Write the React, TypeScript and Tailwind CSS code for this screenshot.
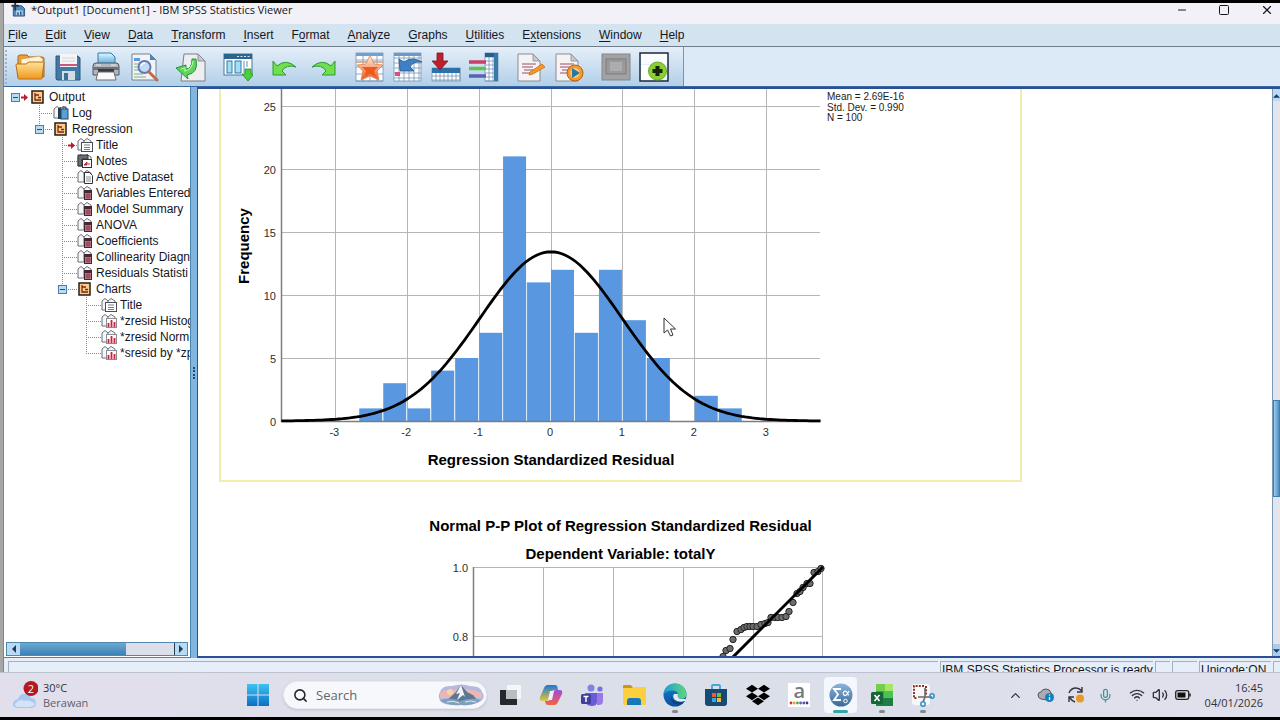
import React, { useId } from "react";
import { ChevronUp, Mic, Minus, Search, Square, Volume2, Wifi, X } from "lucide-react";
import { FaDropbox } from "react-icons/fa";

/* ---------- Menu ---------- */

const menus: [string, string, string][] = [
  ["", "F", "ile"],
  ["", "E", "dit"],
  ["", "V", "iew"],
  ["", "D", "ata"],
  ["", "T", "ransform"],
  ["", "I", "nsert"],
  ["F", "o", "rmat"],
  ["", "A", "nalyze"],
  ["", "G", "raphs"],
  ["", "U", "tilities"],
  ["E", "x", "tensions"],
  ["", "W", "indow"],
  ["", "H", "elp"],
];

/* ---------- Toolbar icons ---------- */

function Icon({ children }: { children: React.ReactNode }) {
  return (
    <svg viewBox="0 0 30 30" className="h-[30px] w-[30px]" aria-hidden="true">
      {children}
    </svg>
  );
}

function Grad({ id, a, b }: { id: string; a: string; b: string }) {
  return (
    <linearGradient id={id} x1="0" y1="0" x2="0" y2="1">
      <stop offset="0" stopColor={a} />
      <stop offset="1" stopColor={b} />
    </linearGradient>
  );
}

function OpenIcon() {
  const g = useId();
  return (
    <Icon>
      <Grad id={g} a="#fde39a" b="#f0981c" />
      <path d="M3 5q0-2 2-2h7l2 2h13q2 0 2 2v18H3z" fill="#efa42f" stroke="#a8621a" strokeWidth="1" />
      <path d="M6 7l18-3 4 3v6H6z" fill="#fff3d4" stroke="#c98a3a" strokeWidth=".7" />
      <path d="M1 13q0-1 1-1h9l3-2h14q1 0 1 1l-2 15q0 1-1 1H4q-1 0-1-1z" fill={`url(#${g})`} stroke="#b86e16" strokeWidth="1" />
    </Icon>
  );
}

function SaveIcon() {
  return (
    <Icon>
      <path d="M3 4h22l2 2v22H4l-1-1z" fill="#4179a6" stroke="#2b587f" />
      <rect x="7" y="2" width="17" height="13" fill="#f5f5f8" />
      <path d="M7 13h17" stroke="#c2305f" strokeWidth="1.6" />
      <path d="M9 6h13M9 9h13" stroke="#c9ccd4" strokeWidth=".8" />
      <rect x="9" y="19" width="13" height="9" fill="#d5dbe2" />
      <rect x="11" y="21" width="4" height="7" fill="#3e6f99" />
    </Icon>
  );
}

function PrintIcon() {
  const g = useId();
  return (
    <Icon>
      <Grad id={g} a="#e2f6ff" b="#4ba7dc" />
      <path d="M7 1h13l4 4v8H7z" fill={`url(#${g})`} stroke="#3979a5" />
      <path d="M2 14q0-3 3-3h20q3 0 3 3v9H2z" fill="#b3b6bd" stroke="#54575e" />
      <path d="M2 15h26v3H2z" fill="#6f727a" />
      <rect x="7" y="17" width="16" height="3" fill="#393b41" />
      <path d="M7 20h16l2 8H5z" fill="#fafafa" stroke="#686b72" />
      <path d="M5 13h5M20 13h5" stroke="#e9e9ec" />
    </Icon>
  );
}

function PreviewIcon() {
  return (
    <Icon>
      <path d="M3 2h18l6 6v20H3z" fill="#f1f3f7" stroke="#77818e" />
      <path d="M21 2v6h6z" fill="#4e86b3" />
      <path d="M5 6h6v3H5z" fill="#5c9de0" />
      <path d="M5 12h5M5 15h5M5 18h5M5 22h9M5 25h12" stroke="#79b37c" />
      <circle cx="15.500" cy="15" r="6" fill="#c4d8f8" stroke="#6578b2" strokeWidth="2" />
      <path d="M12 14q1-3 4-3" stroke="#fff" strokeWidth="1.500" fill="none" />
      <path d="M20 20l8 8" stroke="#bf6b4b" strokeWidth="3" strokeLinecap="round" />
    </Icon>
  );
}

function ExportIcon() {
  return (
    <Icon>
      <path d="M8 2h14l7 7v20H5z" fill="#eeeef0" stroke="#7b7e86" />
      <path d="M22 2v7h7z" fill="#c8cad0" stroke="#7b7e86" strokeWidth=".8" />
      <path d="M0 16l10-3v4q6 0 6-10h4q3 14-9 16l1 4z" fill="#5fd45c" stroke="#249538" strokeWidth="1" />
      <path d="M5 17l4-1v3q7-1 8-10" fill="none" stroke="#b6f5a5" strokeWidth="1.200" />
    </Icon>
  );
}

function RecallIcon() {
  return (
    <Icon>
      <rect x="1" y="2" width="28" height="21" fill="#fff" stroke="#4e7495" />
      <rect x="1" y="2" width="28" height="5" fill="#2c638f" />
      <path d="M14 4.500h13" stroke="#cfe6f5" strokeDasharray="2 1.500" />
      <rect x="4" y="9" width="5" height="12" fill="#a4def5" stroke="#2d78a8" />
      <rect x="12" y="9" width="6" height="12" fill="#a4def5" stroke="#2d78a8" />
      <path d="M21 9v12M24 9v6" stroke="#5796bd" />
      <path d="M22 17h6v5h3l-6 7-6-7h3z" fill="#4bcf3c" stroke="#23882a" strokeWidth=".8" />
    </Icon>
  );
}

function CurvedArrow({ flip }: { flip?: boolean }) {
  return (
    <Icon>
      <g transform={flip ? "translate(30 0) scale(-1 1)" : undefined}>
        <path d="M3 9l4 5q9-8 19 1-10-3-14 4l4 4H3z" fill="#6ee04e" stroke="#2f9a35" strokeWidth="1" strokeLinejoin="round" />
      </g>
    </Icon>
  );
}

function Grid({ x, y, w, h, step = 5 }: { x: number; y: number; w: number; h: number; step?: number }) {
  const cols = Math.floor(w / step);
  const rows = Math.floor(h / step);
  return (
    <g stroke="#7695b5" strokeWidth=".8">
      <rect x={x} y={y} width={w} height={h} fill="#fdfdff" />
      {Array.from({ length: cols }, (_, i) => (
        <path key={`c${i}`} d={`M${x + (i + 1) * step} ${y}v${h}`} />
      ))}
      {Array.from({ length: rows }, (_, i) => (
        <path key={`r${i}`} d={`M${x} ${y + (i + 1) * step}h${w}`} />
      ))}
    </g>
  );
}

function StarIcon() {
  const g = useId();
  return (
    <Icon>
      <Grad id={g} a="#fff4e6" b="#ee5a1b" />
      <Grid x={1} y={1} w={27} h={28} step={7} />
      <rect x="1" y="1" width="27" height="3" fill="#6ea0d6" />
      <path d="M1 10h27" stroke="#cf9a72" strokeWidth="1.500" />
      <path d="M15 3l4 9 9 1-6 6 2 9-9-4-9 4 2-9-6-6 9-1z" fill={`url(#${g})`} stroke="#e08454" strokeWidth=".8" />
      <path d="M7 15h16l-4 4 2 6-6-3-6 3 2-6z" fill="#ef5a1c" />
    </Icon>
  );
}

function GotoCaseIcon() {
  return (
    <Icon>
      <Grid x={1} y={1} w={27} h={28} />
      <rect x="1" y="1" width="27" height="3" fill="#6a9acb" />
      <path d="M7 19l-1-12 5 3q8-6 18 0-9-1-12 5l4 4z" fill="#3f80c4" stroke="#24558e" strokeWidth=".8" />
      <rect x="2" y="20" width="5" height="4" fill="#db4f7a" />
    </Icon>
  );
}

function GotoVariableIcon() {
  return (
    <Icon>
      <Grid x={1} y={16} w={28} h={13} step={4} />
      <rect x="1" y="16" width="28" height="5" fill="#2b71a6" />
      <path d="M6 1h6v8h5l-8 9-8-9h5z" fill="#bf1f2c" stroke="#7e1520" strokeWidth=".8" />
    </Icon>
  );
}

function VariablesIcon() {
  return (
    <Icon>
      <Grid x={16} y={1} w={13} h={28} step={4} />
      <rect x="16" y="1" width="13" height="4" fill="#265f8c" />
      <rect x="25" y="1" width="4" height="28" fill="#347bab" />
      <path d="M0 10h17" stroke="#c93f66" strokeWidth="3.500" />
      <path d="M0 16.500h17" stroke="#62c04c" strokeWidth="3.500" />
      <path d="M0 24h17" stroke="#5465b4" strokeWidth="3.500" />
    </Icon>
  );
}

function ScriptPage() {
  return (
    <>
      <path d="M2 2h15l7 7v20H2z" fill="#f5f3f4" stroke="#8b8c92" />
      <path d="M17 2v7h7z" fill="#c8c8cd" stroke="#8b8c92" strokeWidth=".8" />
      <path d="M6 12h14M6 15h11M8 18h12M6 21h11" stroke="#9a5266" strokeWidth="1.200" />
    </>
  );
}

function EditScriptIcon() {
  return (
    <Icon>
      <ScriptPage />
      <path d="M14 20l12-8 3 3-12 7-4 1z" fill="#f39a25" stroke="#c56d19" strokeWidth=".8" />
    </Icon>
  );
}

function RunScriptIcon() {
  return (
    <Icon>
      <ScriptPage />
      <circle cx="21" cy="21" r="8" fill="#f49a2a" stroke="#b76112" />
      <circle cx="21" cy="21" r="5" fill="#f9c57b" />
      <path d="M18 16l8 5-8 5z" fill="#2678a8" />
    </Icon>
  );
}

function DisabledIcon() {
  return (
    <Icon>
      <rect x="1" y="2" width="28" height="26" fill="#a2a2a4" stroke="#858588" />
      <rect x="5" y="7" width="20" height="15" fill="#9a9a9c" stroke="#7c7c80" />
      <rect x="9" y="10" width="12" height="9" fill="#adadae" />
    </Icon>
  );
}

function AddIcon() {
  return (
    <Icon>
      <rect x="1" y="1" width="28" height="28" fill="#e4f0fb" stroke="#1c2a3d" strokeWidth="1.500" />
      <path d="M2 2h26v10H2z" fill="#f9fcff" />
      <path d="M2 13h13v15H2z" fill="#fff" />
      <circle cx="18.500" cy="19" r="9" fill="#8bd02e" stroke="#6ba828" />
      <path d="M18.500 14v10M13.500 19h10" stroke="#17240f" strokeWidth="4" />
    </Icon>
  );
}

const toolGroups: { label: string; icon: React.ReactNode }[][] = [
  [
    { label: "Open", icon: <OpenIcon /> },
    { label: "Save", icon: <SaveIcon /> },
    { label: "Print", icon: <PrintIcon /> },
    { label: "Print preview", icon: <PreviewIcon /> },
  ],
  [{ label: "Export", icon: <ExportIcon /> }],
  [{ label: "Recall dialogs", icon: <RecallIcon /> }],
  [
    { label: "Undo", icon: <CurvedArrow /> },
    { label: "Redo", icon: <CurvedArrow flip /> },
  ],
  [
    { label: "Go to data", icon: <StarIcon /> },
    { label: "Go to case", icon: <GotoCaseIcon /> },
    { label: "Go to variable", icon: <GotoVariableIcon /> },
    { label: "Variables", icon: <VariablesIcon /> },
  ],
  [
    { label: "Edit script", icon: <EditScriptIcon /> },
    { label: "Run script", icon: <RunScriptIcon /> },
  ],
  [
    { label: "Designate window", icon: <DisabledIcon /> },
    { label: "Add", icon: <AddIcon /> },
  ],
];

/* ---------- Outline tree ---------- */

type Kind = "folder" | "log" | "title" | "notes" | "data" | "table" | "chart";
type Node = { label: string; depth: number; kind: Kind; open?: boolean; current?: boolean; last?: boolean };

const tree: Node[] = [
  { label: "Output", depth: 0, kind: "folder", open: true, current: true },
  { label: "Log", depth: 1, kind: "log" },
  { label: "Regression", depth: 1, kind: "folder", open: true, last: true },
  { label: "Title", depth: 2, kind: "title", current: true },
  { label: "Notes", depth: 2, kind: "notes" },
  { label: "Active Dataset", depth: 2, kind: "data" },
  { label: "Variables Entered", depth: 2, kind: "table" },
  { label: "Model Summary", depth: 2, kind: "table" },
  { label: "ANOVA", depth: 2, kind: "table" },
  { label: "Coefficients", depth: 2, kind: "table" },
  { label: "Collinearity Diagn", depth: 2, kind: "table" },
  { label: "Residuals Statisti", depth: 2, kind: "table" },
  { label: "Charts", depth: 2, kind: "folder", open: true, last: true },
  { label: "Title", depth: 3, kind: "title" },
  { label: "*zresid Histog", depth: 3, kind: "chart" },
  { label: "*zresid Norm", depth: 3, kind: "chart" },
  { label: "*sresid by *zp", depth: 3, kind: "chart", last: true },
];

const indent = [26, 49, 73, 97];
const trunk = [11, 35, 58, 82];

function Branch({ node }: { node: Node }) {
  const w = indent[node.depth];
  const x = trunk[node.depth];
  return (
    <svg width={w} height="16" className="shrink-0" aria-hidden="true">
      {node.depth > 0 && (
        <g stroke="#4f9aa8" strokeDasharray="1 1">
          <path d={`M${x + 0.5} 0V${node.last ? 8 : 16}`} />
          <path d={`M${x} 8.5H${w}`} />
        </g>
      )}
      {node.open && (
        <g>
          <rect x={x - 3.5} y="4.500" width="8" height="8" fill="#b9dcf5" stroke="#4480b5" />
          <path d={`M${x - 2} 8.5h5`} stroke="#1f4f86" />
        </g>
      )}
      {node.current && (
        <path d={`M${w - 9} 7.5h3v-2.5l4 3.5-4 3.500v-2.500h-3z`} fill="#bf1730" />
      )}
    </svg>
  );
}

function NodeIcon({ kind }: { kind: Kind }) {
  if (kind === "folder") {
    return (
      <svg width="16" height="16" className="shrink-0" aria-hidden="true">
        <rect x="2" y="2" width="11" height="12" fill="#f9cf8c" stroke="#2b1c10" strokeWidth="1.500" />
        <path d="M5 4v7h3M5 6h4M8 8.500h3M8 11h3" stroke="#8a1f18" strokeWidth="1.300" fill="none" />
      </svg>
    );
  }
  return (
    <svg width="16" height="16" className="shrink-0" aria-hidden="true">
      <path d="M1 13V4l3-2.500 3 2.500v9H1zM7 4l3-2.500L14 4v9H7" fill="#f7f7f9" stroke="#6a6c74" />
      {kind === "log" && (
        <>
          <path d="M5 3l3-1v12H5z" fill="#2c3d4c" />
          <rect x="8" y="4" width="7" height="10" fill="#5b9fd3" stroke="#1d4a73" />
          <path d="M10 4V2h3v2" stroke="#1d4a73" fill="none" />
        </>
      )}
      {kind === "title" && (
        <>
          <rect x="4.500" y="5.500" width="11" height="9" fill="#fff" stroke="#4b4d55" />
          <path d="M7 8h6M7 10.500h6M7 12.500h6" stroke="#777983" />
        </>
      )}
      {kind === "notes" && (
        <>
          <path d="M1 2h10v4H5v7H1z" fill="#6b6d74" stroke="#303238" />
          <rect x="5.500" y="6.500" width="9" height="8" fill="#fff" stroke="#303238" />
          <path d="M7 12l3-3v3zM11 11h2" stroke="#b62a45" fill="#b62a45" />
        </>
      )}
      {kind === "data" && (
        <>
          <path d="M7.500 3.500h5l3 3v8h-8z" fill="#fff" stroke="#303238" />
          <path d="M9 8h5M9 10h5M9 12h5" stroke="#8b8d95" />
        </>
      )}
      {kind === "table" && (
        <>
          <rect x="7.500" y="5.500" width="7" height="9" fill="#c98a96" stroke="#3c2a33" />
          <rect x="8" y="6" width="6" height="2" fill="#54202f" />
          <path d="M8 10h6M8 12h6M10 8v6M12 8v6" stroke="#7f3345" strokeWidth=".8" />
        </>
      )}
      {kind === "chart" && (
        <>
          <rect x="5.500" y="5.500" width="10" height="9" fill="#fff" stroke="#8b8d95" />
          <path d="M7.500 14v-4M10.500 14V7M13.500 14V9" stroke="#c2253f" strokeWidth="1.800" />
        </>
      )}
    </svg>
  );
}

function Outline() {
  return (
    <ul className="min-h-0 flex-1 overflow-hidden">
      {tree.map((n, i) => (
        <li key={i} className="flex h-4 items-center overflow-hidden leading-4 whitespace-nowrap">
          <Branch node={n} />
          <NodeIcon kind={n.kind} />
          <span className="ml-[3px] text-[#161622]">{n.label}</span>
        </li>
      ))}
    </ul>
  );
}

/* ---------- Charts ---------- */

const counts = [1, 3, 1, 4, 5, 7, 21, 11, 12, 7, 12, 8, 5, 0, 2, 1];
const hx = (v: number) => 330 + v * 71.9;
const hy = (n: number) => 332 - n * 12.6;
const density = (v: number) => (100 / 3 / (0.99 * Math.sqrt(2 * Math.PI))) * Math.exp(-(v * v) / (2 * 0.99 * 0.99));
const curve = Array.from({ length: 151 }, (_, i) => {
  const v = -3.75 + i * 0.05;
  return `${i ? "L" : "M"}${hx(v).toFixed(1)} ${hy(density(v)).toFixed(1)}`;
}).join("");

function Histogram() {
  return (
    <svg viewBox="0 0 799 391" className="block h-[391px] w-[799px]" role="img" aria-label="Histogram of regression standardized residual" fontFamily="Liberation Sans, Arial, sans-serif">
      <g stroke="#b5b5b5">
        {[5, 10, 15, 20, 25].map((n) => (
          <path key={n} d={`M60 ${Math.floor(hy(n)) + 0.5}H599`} />
        ))}
        {[-3, -2, -1, 0, 1, 2, 3].map((v) => (
          <path key={v} d={`M${Math.floor(hx(v)) + 0.5} 0V332`} />
        ))}
      </g>
      {counts.map((n, i) => (
        <rect key={i} x={hx(-8 / 3 + i / 3)} y={hy(n)} width="23" height={n * 12.6} fill="#5997e0" />
      ))}
      {counts.slice(1).map((_, i) => (
        <path key={i} d={`M${hx(-8 / 3 + (i + 1) / 3) - 0.5} ${hy(Math.min(counts[i], counts[i + 1]))}V332`} stroke="#d8e8f8" />
      ))}
      <path d="M60.500 0V332.500H599" fill="none" stroke="#7d7d7d" strokeWidth="1.500" />
      <path d={curve} fill="none" stroke="#000" strokeWidth="2.800" />
      <g fontSize="11" fill="#2e2e2e">
        {[0, 5, 10, 15, 20, 25].map((n) => (
          <text key={n} x="55" y={hy(n) + 5} textAnchor="end">{n}</text>
        ))}
        {[-3, -2, -1, 0, 1, 2, 3].map((v) => (
          <text key={v} x={hx(v) - 1} y="347" textAnchor="middle">{v}</text>
        ))}
      </g>
      <g fontSize="10" fill="#1c1c1c">
        <text x="606" y="11">Mean = 2.69E-16</text>
        <text x="606" y="22">Std. Dev. = 0.990</text>
        <text x="606" y="32">N = 100</text>
      </g>
      <g fontSize="15" fontWeight="700" fill="#000" textAnchor="middle">
        <text x="330" y="376">Regression Standardized Residual</text>
        <text transform="translate(28 157) rotate(-90)">Frequency</text>
      </g>
    </svg>
  );
}

const points: [number, number][] = [
  [275, 90], [278, 84], [282, 82], [285, 73], [289, 65], [293, 63], [296, 61], [299, 60], [302, 60], [305, 60], [309, 60],
  [313, 58], [317, 57], [320, 56], [323, 51], [327, 51], [330, 51], [334, 51], [338, 50], [341, 45],
  [345, 36], [349, 27], [352, 25], [355, 21], [359, 17], [362, 17], [366, 6], [370, 5], [373, 2],
];

function PPPlot() {
  return (
    <svg viewBox="0 2 803 93" className="block h-[93px] w-[803px] overflow-visible" role="img" aria-label="Normal P-P plot" fontFamily="Liberation Sans, Arial, sans-serif">
      <g transform="translate(229 0)">
        <g stroke="#b5b5b5">
          <path d="M25 1.500H375M25 70.500H375" />
          <path d="M95.500 1V95M165.500 1V95M235.500 1V95M305.500 1V95M374.500 1V95" />
        </g>
        <path d="M25.500 1V95" stroke="#7d7d7d" strokeWidth="1.500" />
        <g fill="#6c6c6c" stroke="#262626">
          {points.map(([x, y]) => (
            <circle key={`${x}-${y}`} cx={x} cy={y + 0.5} r="3.200" />
          ))}
        </g>
        <path d="M375 1L281 95" stroke="#000" strokeWidth="3" />
        <g fontSize="11" fontWeight="400" fill="#2e2e2e" textAnchor="end">
          <text x="20" y="6">1.0</text>
          <text x="20" y="75">0.8</text>
        </g>
      </g>
    </svg>
  );
}

/* ---------- Taskbar ---------- */

function WindowsLogo() {
  const g = useId();
  return (
    <svg viewBox="0 0 22 22" className="h-[22px] w-[22px]" aria-hidden="true">
      <Grad id={g} a="#3dc3f2" b="#0b6fc4" />
      <path d="M0 0h10.500v10.500H0zM11.500 0H22v10.500H11.500zM0 11.500h10.500V22H0zM11.500 11.500H22V22H11.500z" fill={`url(#${g})`} />
    </svg>
  );
}

function Art({ children }: { children: React.ReactNode }) {
  return (
    <svg viewBox="0 0 24 24" className="h-6 w-6" aria-hidden="true">
      {children}
    </svg>
  );
}

function TaskViewArt() {
  return (
    <Art>
      <rect x="9" y="2" width="14" height="14" rx="1" fill="#f4f6f7" />
      <path d="M2 7h7v9h10v6H3q-1 0-1-1z" fill="#26282b" />
      <rect x="8" y="7" width="11" height="9" fill="#babdc0" />
    </Art>
  );
}

function CopilotArt() {
  const a = useId();
  const b = useId();
  return (
    <Art>
      <Grad id={a} a="#1a77d6" b="#e8c63a" />
      <Grad id={b} a="#a24ae0" b="#f2643d" />
      <path d="M9 2h7q2 0 2.500 2l.5 3h-4q-2 0-3 3l-2 6q-1 2-3 2H3Q0 18 1 14L5 5q1-3 4-3z" fill={`url(#${a})`} />
      <path d="M15 22H9q-2 0-2.500-2L6 18h3q2 0 3-3l2-6q1-2 3-2h4q3 0 2 4l-4 8q-1 3-4 3z" fill={`url(#${b})`} />
      <path d="M11 8h4l-2 9H9z" fill="#f3edf5" />
    </Art>
  );
}

function TeamsArt() {
  return (
    <Art>
      <circle cx="11" cy="5" r="3.500" fill="#7e82e6" />
      <circle cx="20" cy="6" r="2.600" fill="#7a6fe0" />
      <path d="M5 10h12v9q0 4-5 4t-7-4z" fill="#6a5bd6" />
      <path d="M17 10h6v8q0 4-4 4h-2z" fill="#9a78ea" />
      <rect x="1" y="11" width="10" height="10" rx="1.500" fill="#3f3f9e" />
      <path d="M3.500 13.500h5M6 13.500V19" stroke="#fff" strokeWidth="1.500" />
    </Art>
  );
}

function FolderArt() {
  return (
    <Art>
      <path d="M1 3q0-1 1-1h7l2 3H1z" fill="#cf9417" />
      <path d="M1 5h10l2-1h10q1 0 1 1v16q0 1-1 1H2q-1 0-1-1z" fill="#fccf3e" />
      <path d="M5 18q0-3 3-3h8q3 0 3 3v4H5z" fill="#1878b9" />
    </Art>
  );
}

function EdgeArt() {
  const a = useId();
  const b = useId();
  return (
    <Art>
      <linearGradient id={a} x1="0" y1="0" x2="1" y2="0">
        <stop offset="0" stopColor="#1d9ddb" />
        <stop offset="1" stopColor="#5fd873" />
      </linearGradient>
      <Grad id={b} a="#1685c9" b="#0c4e9e" />
      <circle cx="12" cy="12" r="11.500" fill={`url(#${b})`} />
      <path d="M.5 11Q2 .5 12 .5T23.500 11q0 5-6 5-4 0-2.500-2.500Q16 8 10 7.500T.5 11z" fill={`url(#${a})`} />
      <path d="M10 9q-4 4 0 8 4 4 12 1l-3 3q-9 2-11-5-1-5 2-7z" fill="#0b3f86" />
      <path d="M11 11h4q-1 4 2 5h6l-1 2q-6 2-10-1-3-3-1-6z" fill="#e3ebf2" />
    </Art>
  );
}

function StoreArt() {
  return (
    <Art>
      <path d="M8 7V3q0-1 1-1h6q1 0 1 1v4" fill="none" stroke="#3fa7db" strokeWidth="1.800" />
      <path d="M1 6h22v14q0 3-3 3H4q-3 0-3-3z" fill="#174a74" />
      <path d="M8 10h4v4H8z" fill="#ee5a35" />
      <path d="M13 10h4v4h-4z" fill="#80bb34" />
      <path d="M8 15h4v4H8z" fill="#34a8e0" />
      <path d="M13 15h4v4h-4z" fill="#f8bd2c" />
    </Art>
  );
}

function AmazonArt() {
  return (
    <span className="flex h-6 w-[22px] flex-col items-center bg-white">
      <span className="h-[18px] font-['Open_Sans',sans-serif] text-[20px] leading-[16px] font-semibold text-[#77787b]">a</span>
      <svg viewBox="0 0 20 4" className="h-1 w-5" aria-hidden="true">
        {["#c23a2c", "#e8a22b", "#52a551", "#3274c2", "#7c42a2", "#2f3f87"].map((c, i) => (
          <circle key={c} cx={2 + i * 3.2} cy="2" r="1.400" fill={c} />
        ))}
      </svg>
    </span>
  );
}

function SpssArt() {
  const g = useId();
  return (
    <Art>
      <Grad id={g} a="#8db4da" b="#39699b" />
      <circle cx="12" cy="12" r="11.500" fill={`url(#${g})`} />
      <path d="M12 6H5l4 5.500L5 17h7" fill="none" stroke="#fff" strokeWidth="1.800" />
      <path d="M20 8q-3 6-5 4t1-4q2 0 3.500 4.500" fill="none" stroke="#fff" strokeWidth="1.200" />
      <circle cx="16.500" cy="18" r="1.800" fill="none" stroke="#fff" />
    </Art>
  );
}

function ExcelArt() {
  return (
    <Art>
      <path d="M6 1h16q1 0 1 1v20q0 1-1 1H6z" fill="#2ea85a" />
      <path d="M6 1h9v7H6z" fill="#74d04b" />
      <path d="M15 1h8v7h-8z" fill="#a7e46a" />
      <path d="M14 8h9v7h-9z" fill="#4fc052" />
      <path d="M6 15h17v8H6z" fill="#1d7f44" />
      <rect x="1" y="9" width="12" height="12" rx="1.500" fill="#14663a" />
      <path d="M4.500 12l5 6M9.500 12l-5 6" stroke="#fff" strokeWidth="1.600" />
    </Art>
  );
}

function SnipArt() {
  return (
    <Art>
      <rect x="1" y="1" width="18" height="21" rx="3" fill="#f8f8f9" />
      <path d="M13 3H3v12h3M15 3v9" fill="none" stroke="#8b3526" strokeWidth="2" strokeDasharray="2 1.200" />
      <path d="M14 5v9l-2 5M7 14h14" fill="none" stroke="#646a70" strokeWidth="1.600" />
      <circle cx="12" cy="21" r="2.200" fill="none" stroke="#2b94cc" strokeWidth="1.500" />
      <circle cx="21" cy="13" r="2.200" fill="none" stroke="#2b94cc" strokeWidth="1.500" />
    </Art>
  );
}

function SearchArt() {
  return (
    <svg viewBox="0 0 46 22" className="h-[22px] w-[46px]" aria-hidden="true">
      <path d="M2 8Q4 1 14 2q10-3 18 0 11 0 12 6 4 5-1 9-8 5-20 4-14 1-20-3-4-5-1-10z" fill="#b7b8de" />
      <path d="M2 10q3-5 13-4 12-3 29 3v5H2z" fill="#edb6b4" />
      <circle cx="12" cy="8" r="3" fill="#f7d2b1" />
      <path d="M7 18l10-9 6-8 6 7 6 3 6 7z" fill="#5a7896" />
      <path d="M23 1l-5 9 4-1-3 7 6-5 2 2z" fill="#f3f4f8" />
      <path d="M2 16q10-3 20 1 11-4 21-1-6 6-20 5-15 1-21-5z" fill="#7fa0bd" />
      <path d="M9 18q6-2 12 1M27 18q7-2 11 0" stroke="#dfe6ef" fill="none" />
    </svg>
  );
}

const apps: { label: string; art: React.ReactNode; running?: boolean; active?: boolean }[] = [
  { label: "Task view", art: <TaskViewArt /> },
  { label: "Copilot", art: <CopilotArt /> },
  { label: "Teams", art: <TeamsArt /> },
  { label: "File Explorer", art: <FolderArt /> },
  { label: "Edge", art: <EdgeArt />, running: true },
  { label: "Microsoft Store", art: <StoreArt /> },
  { label: "Dropbox", art: <FaDropbox className="h-6 w-6 text-black" /> },
  { label: "Amazon", art: <AmazonArt /> },
  { label: "SPSS Statistics", art: <SpssArt />, active: true },
  { label: "Excel", art: <ExcelArt />, running: true },
  { label: "Snipping Tool", art: <SnipArt />, running: true },
];

function Taskbar() {
  return (
    <footer className="flex h-[45px] shrink-0 items-center border-t border-[#bcc1ce] bg-linear-to-r from-[#e2dfec] via-[#dadfe8] to-[#e0e0ec] font-['Open_Sans','Noto_Sans',sans-serif] text-[11px] leading-[15px] text-[#30323a]">
      <button className="flex w-[238px] items-center gap-[5px] pl-3 text-left">
        <svg viewBox="0 0 26 28" className="h-7 w-[26px]" aria-hidden="true">
          <path d="M6 27q-5 0-5-4t5-5q2-6 8-5 4 0 5 4 5 0 5 5t-5 5z" fill="#a9c8ef" />
          <path d="M3 23q5-6 9-3 6-2 11 3-2 3-5 3H6q-3 0-3-3z" fill="#d3e3f8" />
          <circle cx="19" cy="7.500" r="7.500" fill="#b3191f" />
          <text x="19" y="11.500" fontSize="11" fill="#fff" textAnchor="middle">2</text>
        </svg>
        <span>
          <span className="block">30°C</span>
          <span className="block text-[#5d5f69]">Berawan</span>
        </span>
      </button>
      <button aria-label="Start" className="flex w-10 justify-center">
        <WindowsLogo />
      </button>
      <label className="ml-[5px] flex h-7 w-[204px] items-center rounded-full border border-[#e9ebf2] bg-[#f6f8fc] pr-[2px] pl-[9px] shadow-sm">
        <Search className="h-[15px] w-[15px] shrink-0 text-[#25272d]" strokeWidth={2.5} />
        <span className="sr-only">Search the computer</span>
        <input
          type="text"
          placeholder="Search"
          className="ml-2 w-0 flex-1 bg-transparent text-[13px] outline-none placeholder:text-[#63656d]"
        />
        <SearchArt />
      </label>
      <nav className="ml-[2px] flex w-[455px]" aria-label="Pinned apps">
        {apps.map((a) => (
          <button key={a.label} aria-label={a.label} className="flex flex-1 justify-center">
            <span
              className={
                a.active
                  ? "relative flex h-[36px] w-[33px] items-center justify-center rounded bg-[#f4f7fb]"
                  : "relative flex h-[36px] w-[33px] items-center justify-center"
              }
            >
              {a.art}
              {a.running && <span className="absolute bottom-0 h-[3px] w-[6px] rounded-full bg-[#85878f]" />}
              {a.active && <span className="absolute bottom-0 h-[3px] w-[15px] rounded-full bg-[#35a6a5]" />}
            </span>
          </button>
        ))}
      </nav>
      <div className="ml-auto flex items-center pr-[17px]">
        <button aria-label="Hidden icons" className="flex w-[30px] justify-center">
          <ChevronUp className="h-[15px] w-[15px]" />
        </button>
        <button aria-label="Cloud sync" className="flex w-[30px] justify-center">
          <svg viewBox="0 0 18 16" className="h-4 w-[18px]" aria-hidden="true">
            <path d="M4 12q-3-1-3-4t3-3q1-3 5-3t5 4q2 1 2 3l-6 4z" fill="#a9acb2" stroke="#54575d" />
            <circle cx="12.500" cy="10.500" r="4.500" fill="#1580c0" />
            <path d="M12.500 10v3M12.500 7.500v1" stroke="#fff" strokeWidth="1.300" />
          </svg>
        </button>
        <button aria-label="Updates" className="flex w-[30px] justify-center">
          <svg viewBox="0 0 18 18" className="h-[18px] w-[18px]" aria-hidden="true">
            <path d="M2 7q2-5 7-5 3 0 6 3M15 1v5h-5M8 16q-3-1-5-4M2 16v-5h5" fill="none" stroke="#33353b" strokeWidth="1.400" />
            <circle cx="13" cy="12.500" r="4" fill="#e89a22" />
          </svg>
        </button>
        <button aria-label="Microphone" className="flex w-[30px] justify-center">
          <Mic className="h-[15px] w-[15px] text-[#439292]" />
        </button>
        <button aria-label="Network, volume and battery" className="flex items-center gap-[7px] px-[8px]">
          <Wifi className="h-4 w-4" />
          <Volume2 className="h-4 w-4" />
          <svg viewBox="0 0 16 12" className="h-3 w-4" aria-hidden="true">
            <rect x=".7" y="1.700" width="13" height="8.600" rx="2" fill="none" stroke="#222" strokeWidth="1.300" />
            <rect x="2.500" y="3.500" width="8" height="5" fill="#111" />
            <path d="M15 4.500v3" stroke="#222" strokeWidth="1.500" />
          </svg>
        </button>
        <time className="ml-[6px] text-right">
          <span className="block">16:45</span>
          <span className="block">04/01/2026</span>
        </time>
      </div>
    </footer>
  );
}

/* ---------- Window ---------- */

export default function App() {
  return (
    <div className="relative flex h-screen flex-col overflow-hidden border-y-[3px] border-black bg-[#d4e4f1] font-['Liberation_Sans',Arial,sans-serif] text-[12px] text-[#161622]">
      <div className="flex min-h-0 flex-1">
        <div className="w-[3px] shrink-0 bg-[#a6a6a4]" />
        <div className="flex min-w-0 flex-1 flex-col border-l border-[#7d8791]">
          <header className="flex h-[21px] shrink-0 items-center bg-[#f2f1f8] pr-[6px] pb-2 pl-[6px]">
            <svg viewBox="0 0 16 16" className="h-[15px] w-4" aria-hidden="true">
              <path d="M3 4h9l3 3v8H3z" fill="#4f8bc0" stroke="#2a5580" />
              <path d="M5 0v9M1 4h8" stroke="#26354f" strokeWidth="2" />
              <path d="M6 9h7v5H6z" fill="#b8d6ef" />
              <path d="M8 14v-3M11 14v-4" stroke="#244f7b" strokeWidth="1.500" />
            </svg>
            <h1 className="ml-[5px] font-['Open_Sans','Noto_Sans',sans-serif] text-[11px] leading-[14px]">
              *Output1 [Document1] - IBM SPSS Statistics Viewer
            </h1>
            <div className="ml-auto flex gap-[30px]">
              <button aria-label="Minimize"><Minus className="h-3 w-3" /></button>
              <button aria-label="Maximize"><Square className="h-3 w-3" /></button>
              <button aria-label="Close"><X className="h-[14px] w-[14px]" /></button>
            </div>
          </header>

          <nav className="flex h-[22px] shrink-0 items-center gap-[18px] bg-[#d3e3f0] pl-1" aria-label="Menu bar">
            {menus.map(([pre, key, post]) => (
              <button key={pre + key + post}>
                {pre}
                <u className="underline-offset-2">{key}</u>
                {post}
              </button>
            ))}
          </nav>

          <div className="flex h-[40px] shrink-0 border-t border-[#6f7d8c] bg-[#dceaf7]">
            <div className="flex items-center gap-[9px] border-r border-[#7d93aa] bg-linear-to-b from-[#e5eff9] to-[#b2cfe9] pr-[10px] pl-[1px]">
              <div className="-mr-[5px] h-[34px] border-l-2 border-dotted border-[#9fb2c6]" />
              {toolGroups.map((group, i) => (
                <div key={i} className="flex">
                  {group.map((t) => (
                    <button key={t.label} aria-label={t.label} className="flex w-[38px] justify-center">
                      {t.icon}
                    </button>
                  ))}
                </div>
              ))}
            </div>
          </div>

          <main className="flex min-h-0 flex-1 border-t border-[#39699f] bg-[#8bbbe2]">
            <aside className="flex w-[187px] shrink-0 flex-col border-r border-b border-[#4785ae] bg-white pt-[2px]">
              <Outline />
              <div className="mr-[2px] mb-[1px] ml-[2px] flex h-[14px] shrink-0 border border-[#5087ac] bg-[#dcdfe9]">
                <button aria-label="Scroll left" className="flex w-[13px] items-center justify-center bg-[#b9daf4]">
                  <svg viewBox="0 0 6 8" className="h-2 w-[6px]" aria-hidden="true"><path d="M5 0v8L1 4z" fill="#1d3b57" /></svg>
                </button>
                <div className="flex-1">
                  <div className="h-full w-[69%] bg-linear-to-b from-[#6aa9d3] to-[#3d81b4]" />
                </div>
                <button aria-label="Scroll right" className="flex w-[13px] items-center justify-center border-l border-[#26405a] bg-[#b9daf4]">
                  <svg viewBox="0 0 6 8" className="h-2 w-[6px]" aria-hidden="true"><path d="M1 0v8l4-4z" fill="#1d3b57" /></svg>
                </button>
              </div>
            </aside>
            <div className="flex w-[6px] shrink-0 items-center justify-center bg-[#82b6df]">
              <div className="h-3 border-l-2 border-dotted border-[#1f4a78]" />
            </div>

            <section className="flex min-w-0 flex-1 border-y-2 border-l border-[#2d4f96] bg-white">
              <div className="min-w-0 flex-1 overflow-hidden pl-[21px]">
                <div className="w-[803px] border-2 border-t-0 border-[#f3ecad]">
                  <Histogram />
                </div>
                <div className="flex w-[803px] flex-col items-center pt-[30px] text-[15px] font-bold text-black">
                  <h2 className="leading-7">Normal P-P Plot of Regression Standardized Residual</h2>
                  <h3 className="leading-7">Dependent Variable: totalY</h3>
                  <PPPlot />
                </div>
              </div>
              <div className="flex w-2 shrink-0 flex-col border-l border-[#7b9bbb] bg-[#e4e5ec]">
                <button aria-label="Scroll up" className="flex h-3 justify-center bg-[#b9daf4]">
                  <svg viewBox="0 0 8 6" className="mt-1 h-[6px] w-2" aria-hidden="true"><path d="M0 5h8L4 1z" fill="#1d3b57" /></svg>
                </button>
                <div className="flex flex-1 flex-col">
                  <div className="basis-[55%]" />
                  <div className="basis-[18%] border border-[#3f7fb2] bg-linear-to-r from-[#9fcbea] to-[#4f91c4]" />
                </div>
                <button aria-label="Scroll down" className="flex h-3 justify-center bg-[#a9cdf0]">
                  <svg viewBox="0 0 8 6" className="mt-1 h-[6px] w-2" aria-hidden="true"><path d="M0 1h8L4 5z" fill="#1d3b57" /></svg>
                </button>
              </div>
            </section>
          </main>

          <div className="flex h-[14px] shrink-0 gap-[2px] overflow-hidden bg-[#e6eff9] pt-[3px] pl-1 leading-[16px]">
            <div className="flex-1 border-t border-l border-[#a3b0bd]" />
            <div className="w-[213px] border-t border-l border-[#a3b0bd] pl-[1px] whitespace-nowrap">
              IBM SPSS Statistics Processor is ready
            </div>
            <div className="w-[15px] border-t border-l border-[#a3b0bd]" />
            <div className="w-[25px] border-t border-l border-[#a3b0bd]" />
            <div className="w-[72px] border-t border-l border-[#a3b0bd] pl-[1px] whitespace-nowrap">Unicode:ON</div>
            <div className="w-[7px] border-t border-l border-[#a3b0bd]" />
          </div>
        </div>
      </div>
      <Taskbar />
      <svg viewBox="0 0 14 20" className="pointer-events-none absolute top-[314px] left-[663px] h-5 w-[14px]" aria-hidden="true">
        <path d="M1 1v15l3.500-3 3 6 2.500-1-2.500-6h5z" fill="#fff" stroke="#333" strokeWidth="1" strokeLinejoin="round" />
      </svg>
    </div>
  );
}
